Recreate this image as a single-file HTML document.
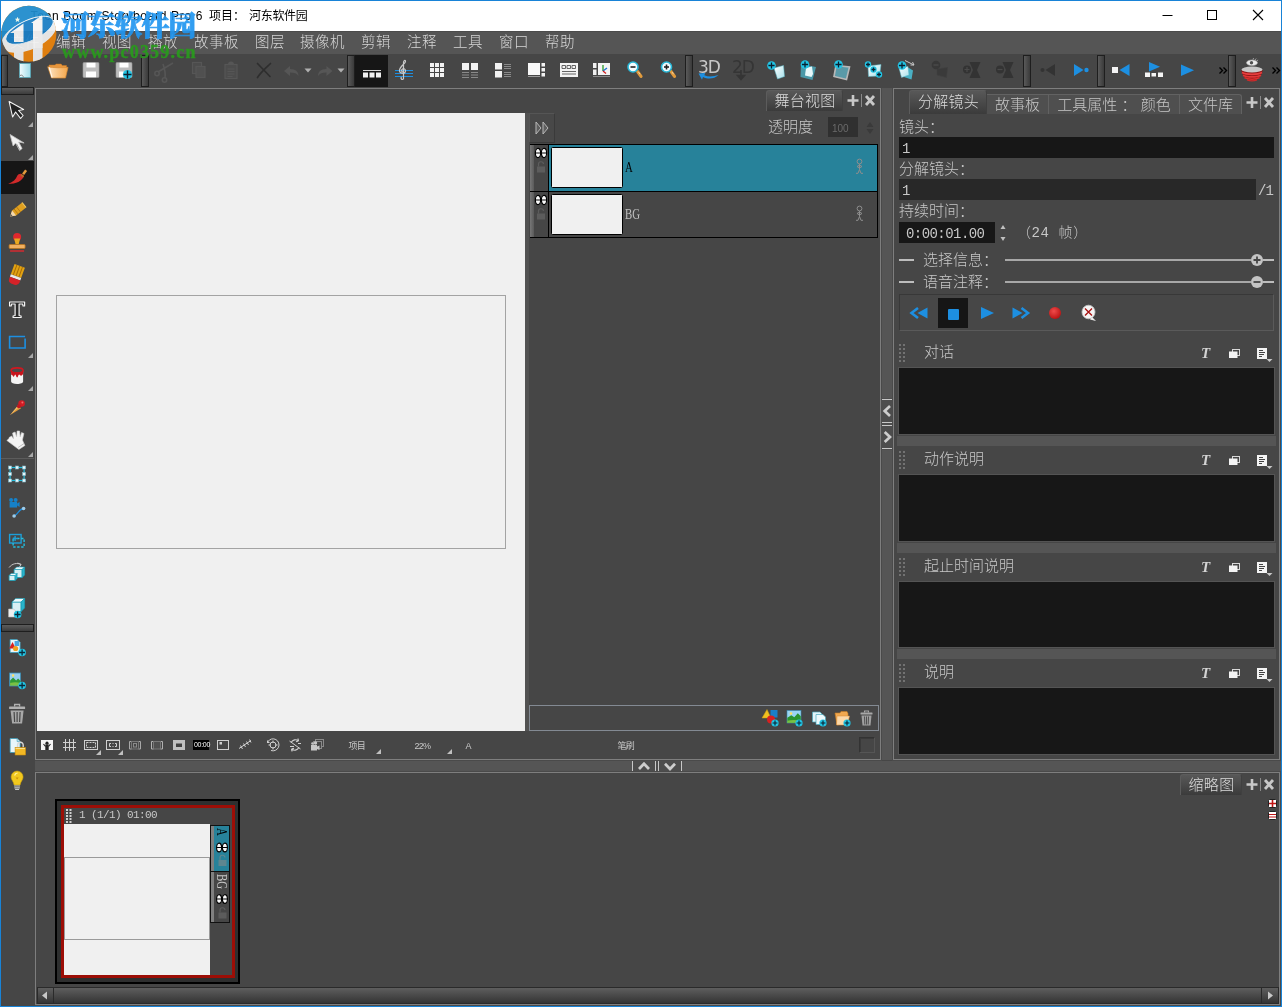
<!DOCTYPE html>
<html lang="zh-CN">
<head>
<meta charset="utf-8">
<title>Toon Boom Storyboard Pro 6 项目: 河东软件园</title>
<style>
html,body{margin:0;padding:0;}
body{width:1282px;height:1007px;overflow:hidden;background:#464646;position:relative;
 font-family:"Liberation Sans","Noto Sans CJK SC",sans-serif;font-weight:300;color:#c8c8c8;font-size:15px;}
.a{position:absolute;}
.ui{font-family:"Liberation Sans","Noto Sans CJK SC",sans-serif;font-weight:300;}
.mono{font-family:"Liberation Mono","Noto Sans CJK SC",monospace;}
.serif{font-family:"Liberation Serif","Noto Serif CJK SC",serif;}
svg{position:absolute;overflow:visible;}
/* window frame */
#frame{left:0;top:0;width:1280px;height:1005px;border:1px solid #1883d7;z-index:50;pointer-events:none;}
#title{left:1px;top:1px;width:1280px;height:30px;background:#fff;}
#title .t{left:30px;top:6px;line-height:20px;font-size:12px;color:#000;font-weight:400;white-space:nowrap;}
#menubar{left:1px;top:31px;width:1280px;height:23px;background:#555;box-shadow:inset 0 1px 0 #4b4b4b;}
#menubar span{position:absolute;top:0px;font-size:14.500px;letter-spacing:0.500px;line-height:22px;color:#d6d6d6;white-space:nowrap;}
#toolbar{left:1px;top:54px;width:1280px;height:34px;background:#464646;}
.hgrip{position:absolute;width:7px;height:32px;top:1px;border:1px solid #1e1e1e;box-sizing:border-box;
 background:linear-gradient(90deg,#5a5a5a,#3a3a3a);}
.line{background:#7e7e7e;}
.dline{background:#3c3c3c;}
.panel{box-sizing:border-box;border:1px solid #7e7e7e;background:#464646;}
.field{background:#171717;box-sizing:border-box;border:1px solid #3a3a3a;}
.tab{box-sizing:border-box;border:1px solid #5c5c5c;border-right-color:#404040;border-bottom:none;padding-left:1px;letter-spacing:0.300px;border-radius:3px 3px 0 0;
 background:linear-gradient(#585858,#3b3b3b);color:#dcdcdc;font-size:15px;text-align:center;white-space:nowrap;}
.tab2{box-sizing:border-box;border:1px solid #626262;border-bottom:none;background:#4f4f4f;color:#c6c6c6;font-size:15px;text-align:center;white-space:nowrap;}
.lbl{white-space:nowrap;font-size:15px;line-height:18px;color:#c8c8c8;}
</style>
</head>
<body style="will-change:transform">
<!-- TITLE BAR -->
<div class="a" id="title">
 <div class="a t" id="t1" style="left:29.500px;top:5px;letter-spacing:0.690px">Toon Boom Storyboard Pro 6</div><div class="a t" id="t2" style="left:208px;top:5px;">项目：</div><div class="a t" id="t3" style="left:248px;top:5px;letter-spacing:-0.300px">河东软件园</div>
 <svg class="a" style="left:1160px;top:7px" width="110" height="14" viewBox="0 0 110 14">
  <path d="M1.5 7.5h10" stroke="#000" stroke-width="1" fill="none"/>
  <rect x="46.500" y="2.500" width="9" height="9" stroke="#000" stroke-width="1" fill="none"/>
  <path d="M92 2l10 10M102 2l-10 10" stroke="#000" stroke-width="1.100" fill="none"/>
 </svg>
</div>
<!-- MENU BAR -->
<div class="a" id="menubar">
 <span style="left:9px">文件</span><span style="left:55px">编辑</span><span style="left:101px">视图</span><span style="left:147px">播放</span><span style="left:193px">故事板</span><span style="left:254px">图层</span><span style="left:299px">摄像机</span><span style="left:360px">剪辑</span><span style="left:406px">注释</span><span style="left:452px">工具</span><span style="left:498px">窗口</span><span style="left:544px">帮助</span>
</div>
<!-- TOOLBAR -->
<div class="a" id="toolbar">
 <div class="hgrip" style="left:0px"></div>
<div class="hgrip" style="left:140px;width:8px"></div>
<div class="hgrip" style="left:346px;width:8px"></div>
<div class="hgrip" style="left:684px;width:8px"></div>
<div class="hgrip" style="left:1022px;width:8px"></div>
<div class="hgrip" style="left:1096px;width:8px"></div>
<div class="hgrip" style="left:1227px;width:8px"></div>
<div class="a" style="left:354px;top:1px;width:33px;height:32px;background:#161616"></div>
<svg class="a" style="left:-1px;top:0" width="1282" height="34" viewBox="0 54 1282 34">
<defs><linearGradient id="gd" x1="0" y1="0" x2="1" y2="0"><stop offset="0" stop-color="#f4fcfe"/><stop offset="1" stop-color="#9fdbe8"/></linearGradient><linearGradient id="gf" x1="0" y1="0" x2="1" y2="0"><stop offset="0" stop-color="#fde3c2"/><stop offset="1" stop-color="#f3a64a"/></linearGradient><linearGradient id="gp" x1="0" y1="0" x2="1" y2="1"><stop offset="0" stop-color="#ffffff"/><stop offset="1" stop-color="#a8e0ea"/></linearGradient></defs>
<rect x="19.500" y="63.500" width="11" height="14" fill="url(#gd)" stroke="#58a8b8" stroke-width="0.800"/><path d="M20 75.500c2-1 3 0 3.500 2" fill="none" stroke="#888" stroke-width="1"/>
<path d="M49 66.500v-1.500h6l1.200-1h5l1 1.500h4.300v3h-17.500z" fill="#e8963c" stroke="#c87a24" stroke-width="0.500"/><path d="M47.700 66.800c6 1.200 14 1.200 20.300 .5l-2.500 10.700h-14z" fill="url(#gf)" stroke="#d88a30" stroke-width="0.700"/><path d="M49.300 67.500l2.800 10" stroke="#fff6ea" stroke-width="1.100"/>
<rect x="83" y="62.500" width="16" height="15" rx="1" fill="#bdbdbd"/><rect x="86.5" y="62.500" width="9" height="5" fill="#fff"/><rect x="86" y="71.500" width="10" height="6" fill="#fff"/><rect x="83" y="62.500" width="16" height="15" rx="1" fill="none" stroke="#9a9a9a" stroke-width="0.600"/>
<rect x="116" y="62.500" width="16" height="15" rx="1" fill="#bdbdbd"/><rect x="119.5" y="62.500" width="9" height="5" fill="#fff"/><rect x="119" y="71.500" width="10" height="6" fill="#fff"/><rect x="116" y="62.500" width="16" height="15" rx="1" fill="none" stroke="#9a9a9a" stroke-width="0.600"/>
<circle cx="127.500" cy="74.500" r="4.600" fill="#22c4e4"/><path d="M127.500 70.500v8M123.500 74.500h8" stroke="#0a2030" stroke-width="1.400"/>
<g stroke="#565656" fill="none" stroke-width="1.600"><path d="M158 72l15-9M163 64c2 6 3 9 2 14"/><circle cx="157" cy="73.500" r="2.200"/><circle cx="164.500" cy="80" r="2.200"/></g>
<rect x="192.500" y="62.500" width="9" height="11" fill="#4c4c4c" stroke="#565656" stroke-width="1.200"/><rect x="196" y="66.500" width="9" height="11" fill="#505050" stroke="#565656" stroke-width="1.200"/>
<rect x="225" y="64.500" width="12" height="14" fill="#4c4c4c" stroke="#565656" stroke-width="1.200"/><path d="M228 64.500a3 3 0 0 1 6 0z" fill="#565656"/><path d="M227.500 69h7M227.500 71.500h7M227.500 74h7M227.500 76.500h5" stroke="#565656" stroke-width="1"/>
<path d="M257.500 63.500l12.500 13M270.500 63.500c-4 4-9 8-13 14" stroke="#2e2e2e" stroke-width="1.700" fill="none" stroke-linecap="round"/>
<path d="M284 71l6-5v3c6 0 8.500 3 8.500 7-1.500-2.500-4-3.500-8.500-3.500v3.500z" fill="#565656"/>
<path d="M304.500 68.500h7l-3.500 4z" fill="#b0b0b0"/>
<path d="M332.500 71l-6-5v3c-6 0-8.500 3-8.500 7 1.500-2.500 4-3.500 8.500-3.500v3.500z" fill="#565656"/>
<path d="M337.500 68.500h7l-3.500 4z" fill="#b0b0b0"/>
<path d="M363 70.500h18" stroke="#d8d8d8" stroke-width="1"/><rect x="363" y="72.500" width="5" height="5" fill="#f0f0f0"/><rect x="369.500" y="72.500" width="5" height="5" fill="#f0f0f0"/><rect x="376" y="72.500" width="5" height="5" fill="#f0f0f0"/>
<path d="M395 70.500h18M395 73.500h18M395 76.500h18" stroke="#1d8fe1" stroke-width="1.200"/><path d="M403 79.500c-2 0-2.500-1.500-1.500-2.500M403.500 79.500v-17c0-2 2-3 2-1s-6 5-6 9c0 3 5 4 6 1 .5-2-1.500-3.500-3-2.500s-1 3 .5 3" fill="none" stroke="#c8c8c8" stroke-width="1.200"/>
<rect x="430" y="63" width="4" height="4" fill="#f2f2f2"/><rect x="435" y="63" width="4" height="4" fill="#f2f2f2"/><rect x="440" y="63" width="4" height="4" fill="#f2f2f2"/><rect x="430" y="68" width="4" height="4" fill="#f2f2f2"/><rect x="435" y="68" width="4" height="4" fill="#f2f2f2"/><rect x="440" y="68" width="4" height="4" fill="#f2f2f2"/><rect x="430" y="73" width="4" height="4" fill="#f2f2f2"/><rect x="435" y="73" width="4" height="4" fill="#f2f2f2"/><rect x="440" y="73" width="4" height="4" fill="#f2f2f2"/>
<rect x="462" y="63" width="7" height="7" fill="#f2f2f2"/><rect x="471" y="63" width="7" height="7" fill="#f2f2f2"/><path d="M462 72.500h7M462 75h7M462 77.500h7M471 72.500h7M471 75h7M471 77.500h7" stroke="#8a8a8a" stroke-width="1"/>
<rect x="495" y="63" width="7" height="6.500" fill="#f2f2f2"/><rect x="495" y="71" width="7" height="6.500" fill="#f2f2f2"/><path d="M504 64.500h7M504 66.500h7M504 68.500h7M504 72.500h7M504 74.500h7M504 76.500h7" stroke="#8a8a8a" stroke-width="1"/>
<rect x="528" y="63" width="12" height="12" fill="#f8f8f8"/><path d="M528 76.500h12" stroke="#9a9a9a" stroke-width="1"/><rect x="541.500" y="63" width="3.500" height="3.500" fill="#f2f2f2"/><rect x="541.500" y="68" width="3.500" height="3.500" fill="#f2f2f2"/><rect x="541.500" y="73" width="3.500" height="3.500" fill="#f2f2f2"/>
<rect x="560" y="63" width="18" height="14" fill="#f4f4f4"/><path d="M562 65.500h3.500v3h-3.500zM567 65.500h3.500v3h-3.500zM572 65.500h3.500v3h-3.500z" fill="none" stroke="#555" stroke-width="0.900"/><path d="M562 71.500h14M562 74h14" stroke="#666" stroke-width="1"/>
<rect x="593" y="63" width="3.500" height="5" fill="#f0f0f0"/><rect x="593" y="69.500" width="3.500" height="5.500" fill="#f0f0f0"/><rect x="598" y="63" width="12" height="12" fill="#f4f4f4"/><path d="M593 76.500h17" stroke="#8a8a8a" stroke-width="1"/><path d="M603 65v6" stroke="#2a9a2a" stroke-width="1.300"/><path d="M603 71l4-3" stroke="#1d6fd0" stroke-width="1.300"/><path d="M603 71l3 2.500" stroke="#d02020" stroke-width="1.300"/>
<path d="M637.8 71.8l3.200 4.600" stroke="#e09a3c" stroke-width="3.200" stroke-linecap="round"/><path d="M638.5 72l1.500 2.200" stroke="#f4d0a0" stroke-width="1" /><circle cx="633" cy="67" r="5" fill="#f4fbfd" stroke="#2ab8d8" stroke-width="1.600"/><path d="M630.5 67h5" stroke="#222" stroke-width="1.600"/>
<path d="M671.3 71.8l3.200 4.600" stroke="#e09a3c" stroke-width="3.200" stroke-linecap="round"/><path d="M672.0 72l1.500 2.200" stroke="#f4d0a0" stroke-width="1" /><circle cx="666.5" cy="67" r="5" fill="#f4fbfd" stroke="#2ab8d8" stroke-width="1.600"/><path d="M664.0 67h5" stroke="#222" stroke-width="1.600"/><path d="M666.5 64.500v5" stroke="#222" stroke-width="1.600"/>
</svg>
<div class="a" style="left:697px;top:4px;font-size:17px;line-height:18px;color:#c8c8c8;font-weight:400;letter-spacing:-1px;font-family:'DejaVu Sans','Liberation Sans',sans-serif">3D</div>
<div class="a" style="left:731px;top:4px;font-size:17px;line-height:18px;color:#353535;font-weight:400;letter-spacing:-1px;font-family:'DejaVu Sans','Liberation Sans',sans-serif">2D</div>
<svg class="a" style="left:-1px;top:0" width="1282" height="34" viewBox="0 54 1282 34">
<path d="M718.500 75c-4 4-10.500 4.500-15.500 2l-1 2.800-3.500-6.300 6.800-.5-1 2.200c4 1.800 9 1.500 14.200-.200z" fill="#1d8fe1"/>
<path d="M741 70v8M737.500 75.500l3.500 4 3.500-4z" stroke="#353535" stroke-width="1.600" fill="#353535"/>
<path d="M774 68l9.500-2.500 1 11-7 2.500z" fill="url(#gp)" stroke="#5ab8c8" stroke-width="0.500"/><circle cx="771.5" cy="65.5" r="4.3" fill="#22c4e4"/><path d="M771.5 62.400000000000006v6.199999999999999M768.4000000000001 65.5h6.199999999999999" stroke="#0a2030" stroke-width="1.300"/>
<path d="M801 64l15 3-3.500 13-12-3z" fill="#4a98a8"/><path d="M806 68l6-1.500 1 7.500-1.500 3-6.500-1.500z" fill="#e8f8fa"/><circle cx="805" cy="64.5" r="4.3" fill="#22c4e4"/><path d="M805 61.400000000000006v6.199999999999999M801.9000000000001 64.5h6.199999999999999" stroke="#0a2030" stroke-width="1.300"/>
<path d="M836 65.500l13.500 1.500-3 12.500-12.500-3z" fill="#5a9aa8" stroke="#b8b8b8" stroke-width="1.600"/><circle cx="838.5" cy="64.5" r="4.3" fill="#22c4e4"/><path d="M838.5 61.400000000000006v6.199999999999999M835.4000000000001 64.5h6.199999999999999" stroke="#0a2030" stroke-width="1.300"/>
<path d="M868 66l13-1.500-1.500 11.500-11 .5z" fill="url(#gp)" stroke="#5ab8c8" stroke-width="0.500"/><circle cx="868" cy="64.5" r="3.2" fill="#22c4e4"/><path d="M868 62.5v4.0M866.0 64.5h4.0" stroke="#0a2030" stroke-width="1.300"/><circle cx="873.5" cy="69.5" r="3.2" fill="#22c4e4"/><path d="M873.5 67.5v4.0M871.5 69.5h4.0" stroke="#0a2030" stroke-width="1.300"/><circle cx="879" cy="74.5" r="3.2" fill="#22c4e4"/><path d="M879 72.5v4.0M877.0 74.5h4.0" stroke="#0a2030" stroke-width="1.300"/>
<path d="M900 70l9-2 4 2.500-1.500 9-9-3z" fill="#4ab0c4"/><path d="M899 68l9-1.500 1 8.500-7.500 2.500z" fill="url(#gp)" stroke="#5ab8c8" stroke-width="0.500"/><path d="M905 60.500l9 4.500M914 65l-3.500 0M914 65l-1.500-3" stroke="#c8c8c8" stroke-width="1" fill="none"/><circle cx="902" cy="65.5" r="4.3" fill="#22c4e4"/><path d="M902 62.400000000000006v6.199999999999999M898.9000000000001 65.5h6.199999999999999" stroke="#0a2030" stroke-width="1.300"/>
<path d="M937 69l10.500-1.500-1 10-9.500-2.500z" fill="#3a3a3a" stroke="#404040" stroke-width="0.600"/><circle cx="936" cy="65" r="4.300" fill="#383838"/><path d="M933.500 65h5" stroke="#4c4c4c" stroke-width="1.300"/>
<path d="M969.5 62h11l-3.500 8 3.500 8h-11l3.500-8z" fill="#333"/><circle cx="967" cy="69.500" r="4" fill="#333"/><path d="M964.500 69.500h5M967 67v5" stroke="#4a4a4a" stroke-width="1.200"/>
<path d="M1002.5 62h11l-3.500 8 3.500 8h-11l3.500-8z" fill="#333"/><circle cx="1000" cy="69.500" r="4" fill="#333"/><path d="M997.500 69.500h5" stroke="#4a4a4a" stroke-width="1.200"/>
<circle cx="1042.500" cy="70" r="2" fill="#333"/><path d="M1055 64v12l-9.500-6z" fill="#333"/>
<path d="M1074 64v12l9.500-6z" fill="#1d8fe1"/><circle cx="1086.500" cy="70" r="2.200" fill="#1d8fe1"/>
<rect x="1112" y="67" width="6" height="6" fill="#f4f4f4"/><path d="M1129.500 64v12l-10-6z" fill="#1d8fe1"/>
<path d="M1149 62v9.500l11-4.800z" fill="#1d8fe1"/><rect x="1145" y="72.500" width="5" height="4.500" fill="#f4f4f4"/><rect x="1151.500" y="73" width="4.500" height="3.500" fill="#f4f4f4"/><rect x="1158" y="72.500" width="5" height="4.500" fill="#f4f4f4"/>
<path d="M1181 64.500v11.500l13-5.800z" fill="#1d8fe1"/>
<path d="M1219.500 67.500l3 3-3 3M1223.500 67.500l3 3-3 3" stroke="#000" stroke-width="1.400" fill="none"/>
<path d="M1272.500 67.500l3 3-3 3M1276.500 67.500l3 3-3 3" stroke="#000" stroke-width="1.400" fill="none"/>
<path d="M1241.500 70c0 5 4 10.500 10.500 10.500s10.500-5.500 10.500-10.500z" fill="#8e1616"/><path d="M1242 72.500c4 2.400 16 2.400 20 0" stroke="#e84040" stroke-width="1.700" fill="none"/><path d="M1243 75.200c4 2.200 14 2.200 18 0" stroke="#e03636" stroke-width="1.600" fill="none"/><path d="M1244.500 77.700c3.500 2 11.500 2 15 0" stroke="#d83030" stroke-width="1.500" fill="none"/><path d="M1247 79.800c3 1.200 7 1.200 10 0" stroke="#d02a2a" stroke-width="1.300" fill="none"/><ellipse cx="1252" cy="69.500" rx="10.500" ry="3" fill="#c8c8c8"/><ellipse cx="1252" cy="62.800" rx="5.500" ry="2.800" fill="#ececec" stroke="#b0b0b0" stroke-width="0.600"/><circle cx="1251.500" cy="62.800" r="1.700" fill="#505050"/><path d="M1255 60l1.200-1.500M1256.500 61l1.600-1M1253 59.600l.6-1.600" stroke="#c0c0c0" stroke-width="0.700"/>
</svg>

</div>
<!-- LEFT TOOLS -->
<div class="a" style="left:1px;top:88px;width:34px;height:918px;background:#464646"></div>
<div class="a" style="left:1px;top:87px;width:33px;height:8px;box-sizing:border-box;border:1px solid #1e1e1e;background:linear-gradient(#5c5c5c,#3c3c3c)"></div>
<div class="a" style="left:1px;top:624px;width:33px;height:8px;box-sizing:border-box;border:1px solid #1e1e1e;background:linear-gradient(#5c5c5c,#3c3c3c)"></div>
<div class="a" style="left:1px;top:161px;width:33px;height:33px;background:#161616"></div>
<div class="a" style="left:1px;top:458px;width:33px;height:1px;background:#5c5c5c"></div>
<svg class="a" style="left:1px;top:95px" width="33" height="33" viewBox="0 0 33 33"><g transform="translate(-0.900 -0.500)"><path d="M9 7l3.500 15.500 3-5 5 6.500 2.500-3-4.500-5 5-1z" fill="#222" stroke="#f4f4f4" stroke-width="1.100" stroke-linejoin="round"/></g></svg><svg class="a" style="left:1px;top:95px" width="33" height="33" viewBox="0 0 33 33"><path d="M32 27v5h-5z" fill="#a8a8a8"/></svg>
<svg class="a" style="left:1px;top:128px" width="33" height="33" viewBox="0 0 33 33"><g transform="translate(-0.900 -0.500)"><path d="M10 7l3 11.500 2.500-3 4 7.500 2.500-2-3.500-6.500 5.500 1z" fill="#f2f2f2" stroke="#c4c4c4" stroke-width="0.800" stroke-linejoin="round"/><path d="M16.500 16.500l3 5.500" stroke="#9a9a9a" stroke-width="1"/></g></svg><svg class="a" style="left:1px;top:128px" width="33" height="33" viewBox="0 0 33 33"><path d="M32 27v5h-5z" fill="#a8a8a8"/></svg>
<svg class="a" style="left:1px;top:161px" width="33" height="33" viewBox="0 0 33 33"><g transform="translate(-0.900 -0.500)"><path d="M22 13l3-4 2 1.500-3 4z" fill="#e39a3c"/><path d="M21.500 13.500l2.500 2c-2 5-8 8-16 8 5-2 8-5 9-8 1-2 3-2.500 4.500-2z" fill="#d22a2a"/><path d="M21.500 13.500l2.500 2-1.200 1.500-2.600-2z" fill="#b06a28"/></g></svg>
<svg class="a" style="left:1px;top:194px" width="33" height="33" viewBox="0 0 33 33"><g transform="translate(-0.900 -0.500)"><path d="M10 23l2-6 10-8 4 5-10 8z" fill="#e0a020"/><path d="M10 23l2-6 4 5z" fill="#f3d9b0"/><path d="M10 23l0.800-2.400 1.600 2z" fill="#555"/><path d="M14 15.500l4 5M16.500 13.500l4 5" stroke="#b87a10" stroke-width="1" fill="none"/><path d="M22 9l4 5" stroke="#f2c860" stroke-width="1.200"/></g></svg>
<svg class="a" style="left:1px;top:227px" width="33" height="33" viewBox="0 0 33 33"><g transform="translate(-0.900 -0.500)"><circle cx="17" cy="10.500" r="4" fill="#e0282e"/><path d="M14 12h6l-1.500 6h-3z" fill="#e8a820"/><rect x="9" y="18" width="16" height="4" rx="1" fill="#f0b060" stroke="#b8741c" stroke-width="0.800"/><path d="M10 24.500h14" stroke="#e0282e" stroke-width="1.400"/></g></svg>
<svg class="a" style="left:1px;top:260px" width="33" height="33" viewBox="0 0 33 33"><g transform="translate(-0.900 -0.500)"><g transform="translate(-0.800 -1.200) rotate(20 17 17)"><rect x="11.500" y="7" width="11" height="11" fill="#e2a212"/><path d="M14 7v11M17 7v11M20 7v11" stroke="#a86e08" stroke-width="1"/><rect x="11.500" y="18" width="11" height="2.500" fill="#e8e8e8"/><path d="M11.500 20.500h11v2a4 4 0 0 1-4 4h-3a4 4 0 0 1-4-4z" fill="#d42228"/></g></g></svg>
<svg class="a" style="left:1px;top:293px" width="33" height="33" viewBox="0 0 33 33"><g transform="translate(-0.900 -0.500)"><path d="M9.500 9.500h15v4h-1.500l-0.500-2h-3.500v11.500l2 0.500v1.500h-8v-1.500l2-0.500v-11.500h-3.500l-0.500 2h-1.500z" fill="#2a2a2a" stroke="#f4f4f4" stroke-width="1.200" stroke-linejoin="round"/></g></svg>
<svg class="a" style="left:1px;top:326px" width="33" height="33" viewBox="0 0 33 33"><g transform="translate(-0.900 -0.500)"><path d="M25 13v9.500h-15.500v-11.500h15.500" fill="none" stroke="#1d8fe1" stroke-width="1.600"/></g></svg><svg class="a" style="left:1px;top:326px" width="33" height="33" viewBox="0 0 33 33"><path d="M32 27v5h-5z" fill="#a8a8a8"/></svg>
<svg class="a" style="left:1px;top:359px" width="33" height="33" viewBox="0 0 33 33"><g transform="translate(-0.900 -0.500)"><path d="M11 12v11c0 1.500 2.500 2.500 6 2.500s6-1 6-2.500v-11z" fill="#f4f4f4"/><ellipse cx="17" cy="12" rx="6" ry="2.600" fill="#4a4a4a" stroke="#d01820" stroke-width="1.600"/><path d="M11 12v4c1 1 1.500 0 2 2 .8 1 1.200-1 2-2 1 0 1 3 2 3s1-3 2-3 1.500 2 2.500 1 .5-1 1.500-1v-4c-1 2-11 2-12 0z" fill="#c8141c"/></g></svg><svg class="a" style="left:1px;top:359px" width="33" height="33" viewBox="0 0 33 33"><path d="M32 27v5h-5z" fill="#a8a8a8"/></svg>
<svg class="a" style="left:1px;top:392px" width="33" height="33" viewBox="0 0 33 33"><g transform="translate(-0.900 -0.500)"><path d="M10 23.500l8-9.500 3 2.800z" fill="#e09a3a"/><path d="M10 23.500l8-9.500 1.300 1.200z" fill="#f0c070"/><circle cx="21.500" cy="12" r="3.300" fill="#d01c24"/><circle cx="18.800" cy="14.800" r="2" fill="#c01820"/><circle cx="22.300" cy="11" r="1" fill="#f06a6a"/></g></svg>
<svg class="a" style="left:1px;top:425px" width="33" height="33" viewBox="0 0 33 33"><g transform="translate(-0.900 -0.500)"><path d="M9 13l2.500-1.500 2 3 -1-6 2.500-1 1.500 5 .5-6 2.500 0 .5 6 1.500-4.500 2.300 1-1.500 6.500 2.500 5.500-6 4-8-6-4-3 2-2z" fill="#f4f4f4" stroke="#d0d0d0" stroke-width="0.600" stroke-linejoin="round"/><path d="M18 23l6-4" stroke="#b0b0b0" stroke-width="0.800"/></g></svg><svg class="a" style="left:1px;top:425px" width="33" height="33" viewBox="0 0 33 33"><path d="M32 27v5h-5z" fill="#a8a8a8"/></svg>
<svg class="a" style="left:1px;top:458px" width="33" height="33" viewBox="0 0 33 33"><g transform="translate(-0.900 -0.500)"><rect x="10" y="10" width="14" height="13" fill="none" stroke="#22bfe0" stroke-width="1.200"/><rect x="8.5" y="8.5" width="3" height="3" fill="#e8f8fc" stroke="#7fb8c8" stroke-width="0.600"/><rect x="15.5" y="8.5" width="3" height="3" fill="#e8f8fc" stroke="#7fb8c8" stroke-width="0.600"/><rect x="22.5" y="8.5" width="3" height="3" fill="#e8f8fc" stroke="#7fb8c8" stroke-width="0.600"/><rect x="8.5" y="15.0" width="3" height="3" fill="#e8f8fc" stroke="#7fb8c8" stroke-width="0.600"/><rect x="22.5" y="15.0" width="3" height="3" fill="#e8f8fc" stroke="#7fb8c8" stroke-width="0.600"/><rect x="8.5" y="21.5" width="3" height="3" fill="#e8f8fc" stroke="#7fb8c8" stroke-width="0.600"/><rect x="15.5" y="21.5" width="3" height="3" fill="#e8f8fc" stroke="#7fb8c8" stroke-width="0.600"/><rect x="22.5" y="21.5" width="3" height="3" fill="#e8f8fc" stroke="#7fb8c8" stroke-width="0.600"/></g></svg>
<svg class="a" style="left:1px;top:491px" width="33" height="33" viewBox="0 0 33 33"><g transform="translate(-0.900 -0.500)"><g transform="translate(0 2)"><rect x="9.500" y="9.500" width="7.500" height="5.500" fill="#1681c8"/><circle cx="11" cy="7.500" r="2" fill="#1681c8"/><circle cx="15.500" cy="7.500" r="2" fill="#1681c8"/><path d="M17 11l2.500-1.500v5l-2.500-1.500z" fill="#1681c8"/><path d="M14 23.500c5-2 3-6 9.500-7.500" fill="none" stroke="#1d8fe1" stroke-width="1.300"/><circle cx="14" cy="23.500" r="1.800" fill="#9ccbea"/><circle cx="23.500" cy="16" r="1.800" fill="#9ccbea"/></g></g></svg>
<svg class="a" style="left:1px;top:524px" width="33" height="33" viewBox="0 0 33 33"><g transform="translate(-0.900 -0.500)"><g transform="translate(0 1.500)"><rect x="9.500" y="9.500" width="11.500" height="8.500" fill="none" stroke="#1d9fd8" stroke-width="1.400"/><rect x="13" y="13.500" width="11" height="8.500" fill="none" stroke="#22bfe0" stroke-width="1.400" stroke-dasharray="2.400 1.600"/><path d="M15 11v5M12.500 13.500h5" stroke="#1d9fd8" stroke-width="1.300"/></g></g></svg>
<svg class="a" style="left:1px;top:557px" width="33" height="33" viewBox="0 0 33 33"><g transform="translate(-0.900 -0.500)"><path d="M9 11c3-4 8-5 12-3" fill="none" stroke="#c8c8c8" stroke-width="1"/><path d="M21 8l-3.500-1.500M21 8l-2 3" stroke="#c8c8c8" stroke-width="1"/><path d="M14 13h8v8h-8z" fill="#d8f0f4" stroke="#18a0b8" stroke-width="0.800"/><path d="M14 13l2.5 -2.5h8l-2.5 2.5z" fill="#eefafc" stroke="#18a0b8" stroke-width="0.600"/><path d="M22 13l2.5 -2.5v8l-2.5 2.5z" fill="#28b4cc" stroke="#18a0b8" stroke-width="0.600"/><path d="M9 19h6v5h-6z" fill="#d8f0f4" stroke="#18a0b8" stroke-width="0.800"/><path d="M9 19l2 -2h6l-2 2z" fill="#eefafc" stroke="#18a0b8" stroke-width="0.600"/><path d="M15 19l2 -2v5l-2 2z" fill="#28b4cc" stroke="#18a0b8" stroke-width="0.600"/></g></svg>
<svg class="a" style="left:1px;top:590px" width="33" height="33" viewBox="0 0 33 33"><g transform="translate(-0.900 -0.500)"><g transform="translate(-0.500 2.500)"><path d="M12.5 10h9v9.5h-9z" fill="#d8f0f4" stroke="#18a0b8" stroke-width="0.800"/><path d="M12.5 10l3.5 -3.5h9l-3.5 3.5z" fill="#eefafc" stroke="#18a0b8" stroke-width="0.600"/><path d="M21.5 10l3.5 -3.5v9.5l-3.5 3.5z" fill="#28b4cc" stroke="#18a0b8" stroke-width="0.600"/><path d="M9 17h5l2 2v6h-7z" fill="#f0f0f0" stroke="#b8b8b8" stroke-width="0.600"/><circle cx="18" cy="22.500" r="3.800" fill="#22c4e4"/><path d="M18 19.500v6M15 22.500h6" stroke="#0a2a3a" stroke-width="1.300"/></g></g></svg>
<svg class="a" style="left:1px;top:632px" width="33" height="33" viewBox="0 0 33 33"><g transform="translate(-0.900 -0.500)"><path d="M10 8h7l3 3v10h-10z" fill="#e8f6fa" stroke="#3a9ab8" stroke-width="0.800"/><rect x="14.500" y="9.500" width="4.500" height="5" fill="#4aa6e0"/><path d="M9 17l3.500-6.500 3 6.500z" fill="#d82020"/><circle cx="15.500" cy="17" r="2.600" fill="#f0a020"/><circle cx="22" cy="21" r="3.800" fill="#22c4e4"/><path d="M22 18v6M19 21h6" stroke="#0a2a3a" stroke-width="1.300"/></g></svg>
<svg class="a" style="left:1px;top:665px" width="33" height="33" viewBox="0 0 33 33"><g transform="translate(-0.900 -0.500)"><rect x="9.500" y="8.500" width="11" height="13" fill="#9ad0f0" stroke="#3a8ab0" stroke-width="0.800"/><path d="M10 21v-5l3-3 3 3 2-2 2.500 2.500v4.500z" fill="#2e9a36"/><path d="M10 21v-2.500c3-1 7-1 10.500 0v2.500z" fill="#7ac043"/><circle cx="13" cy="11" r="1.200" fill="#ffe060"/><circle cx="22" cy="21" r="3.800" fill="#22c4e4"/><path d="M22 18v6M19 21h6" stroke="#0a2a3a" stroke-width="1.300"/></g></svg>
<svg class="a" style="left:1px;top:698px" width="33" height="33" viewBox="0 0 33 33"><g transform="translate(-0.900 -0.500)"><path d="M14.500 9v-2h5v2" fill="none" stroke="#b0b0b0" stroke-width="1.300"/><rect x="9" y="9" width="16" height="2.600" rx="0.600" fill="#b0b0b0"/><path d="M10.500 13h13l-1.500 13h-10z" fill="#a8a8a8"/><path d="M14 14.500l.5 10M17 14.500v10M20 14.500l-.5 10" stroke="#464646" stroke-width="1.200"/></g></svg>
<svg class="a" style="left:1px;top:731px" width="33" height="33" viewBox="0 0 33 33"><g transform="translate(-0.900 -0.500)"><path d="M10 8h7l3 3v11h-10z" fill="#e8f6fa" stroke="#3a9ab8" stroke-width="0.800"/><path d="M17 8v3h3" fill="#bfe4ee" stroke="#3a9ab8" stroke-width="0.600"/><path d="M17.500 17v-2.500a2.800 2.800 0 0 1 5.600 0v2.500" fill="none" stroke="#d8d8d8" stroke-width="1.400"/><rect x="15" y="17" width="10.500" height="7.500" fill="#f2b824" stroke="#c88c10" stroke-width="0.600"/><path d="M15.500 18h9.500" stroke="#fbe08a" stroke-width="1"/></g></svg>
<svg class="a" style="left:1px;top:764px" width="33" height="33" viewBox="0 0 33 33"><g transform="translate(-0.900 -0.500)"><path d="M17 7.500a6 6 0 0 1 6 6c0 3-2.500 4.500-3 8h-6c-.5-3.500-3-5-3-8a6 6 0 0 1 6-6z" fill="#f2c81e" stroke="#c8a010" stroke-width="0.600"/><path d="M14.500 12a3.500 3.500 0 0 1 3-2.500" stroke="#fff4a0" stroke-width="1.200" fill="none"/><path d="M15.500 14h3l-1.500 2z" fill="#c89010"/><path d="M14 22.500h6M14.300 24.300h5.400M15 26h4" stroke="#c8c8c8" stroke-width="1.200"/></g></svg>

<!-- STAGE VIEW PANEL -->
<div class="a panel" style="left:35px;top:88px;width:846px;height:672px;"></div>
<div class="a" style="left:881px;top:88px;width:1px;height:672px;background:#4a4a4a"></div>
<div class="a" style="left:35px;top:760px;width:847px;height:1px;background:#4a4a4a"></div>
<div class="a" id="canvas" style="left:37px;top:113px;width:488px;height:618px;background:#f0f0f0;"></div>
<div class="a" style="left:56px;top:295px;width:450px;height:254px;box-sizing:border-box;border:1px solid #a3a3a3;"></div>
<div class="a" style="left:525px;top:113px;width:4px;height:618px;background:#525252"></div>
<!-- stage tab -->
<div class="a tab" style="left:766px;top:90px;width:77px;height:21px;line-height:20px;">舞台视图</div>
<svg class="a" style="left:847px;top:94px" width="30" height="13" viewBox="0 0 30 13">
 <path d="M6 1v11M0.500 6.500h11" stroke="#c8c8c8" stroke-width="2.600" fill="none"/>
 <path d="M14.500 0v13" stroke="#8a8a8a" stroke-width="1" fill="none"/>
 <path d="M19 2l8 9M27 2l-8 9" stroke="#c8c8c8" stroke-width="2.800" fill="none"/>
</svg>
<!-- collapse button -->
<div class="a" style="left:529px;top:113px;width:26px;height:30px;box-sizing:border-box;border:1px solid #3a3a3a;border-top-color:#555;border-left-color:#555;background:#484848"></div>
<svg class="a" style="left:535px;top:121px" width="15" height="14" viewBox="0 0 15 14">
 <path d="M1 1l5 6-5 6zM8 1l5 6-5 6z" fill="#5e5e5e" stroke="#b8b8b8" stroke-width="1"/>
</svg>
<div class="a lbl" style="left:768px;top:118px;">透明度</div>
<div class="a" style="left:828px;top:117px;width:30px;height:20px;background:#303030;"></div>
<div class="a" style="left:832px;top:122.500px;font-size:10px;line-height:12px;color:#6a6a6a;font-weight:400">100</div>
<svg class="a" style="left:866px;top:122px" width="8" height="12" viewBox="0 0 8 12"><path d="M4 0l3.500 5h-7zM4 12l3.500-5h-7z" fill="#3a3a3a"/></svg>
<!-- layer rows -->
<div class="a" style="left:530px;top:144px;width:348px;height:94px;background:#000"></div>
<div class="a" style="left:530px;top:145px;width:18px;height:46px;background:linear-gradient(90deg,#777 0,#5a5a5a 4px,#464646 4px)"></div>
<div class="a" style="left:530px;top:192px;width:18px;height:45px;background:linear-gradient(90deg,#777 0,#5a5a5a 4px,#464646 4px)"></div>
<div class="a" style="left:549px;top:145px;width:328px;height:46px;background:#27829a"></div>
<div class="a" style="left:549px;top:192px;width:328px;height:45px;background:#464646"></div>
<div class="a" style="left:551px;top:147px;width:72px;height:41px;box-sizing:border-box;border:1px solid #000;border-radius:1.500px;background:#f0f0f0"></div>
<div class="a" style="left:551px;top:194px;width:72px;height:41px;box-sizing:border-box;border:1px solid #000;border-radius:1.500px;background:#f0f0f0"></div>
<div class="a serif" style="left:625px;top:159px;font-size:15px;line-height:16px;color:#000;font-weight:400;transform:scaleX(0.720);transform-origin:0 0">A</div>
<div class="a serif" style="left:625px;top:206px;font-size:15px;line-height:16px;color:#c0c0c0;font-weight:400;transform:scaleX(0.720);transform-origin:0 0">BG</div>
<svg class="a" style="left:0;top:0" width="1282" height="1007" viewBox="0 0 1282 1007">
<g transform="translate(541 153) rotate(0)"><ellipse cx="-3" cy="0" rx="2.600" ry="4.600" fill="#fafafa" stroke="#000" stroke-width="1.100"/><path d="M-5.5 0h5" stroke="#000" stroke-width="1"/><ellipse cx="3" cy="0" rx="2.600" ry="4.600" fill="#fafafa" stroke="#000" stroke-width="1.100"/><path d="M0.5 0h5" stroke="#000" stroke-width="1"/></g>
<g transform="translate(541 167.5) rotate(0)"><rect x="-4" y="-1" width="8" height="6" fill="#5c5c5c"/><path d="M-2.500 -1v-2a2.500 2.500 0 0 1 5 -0.500" fill="none" stroke="#5c5c5c" stroke-width="1.200"/></g>
<g transform="translate(541 200) rotate(0)"><ellipse cx="-3" cy="0" rx="2.600" ry="4.600" fill="#fafafa" stroke="#000" stroke-width="1.100"/><path d="M-5.5 0h5" stroke="#000" stroke-width="1"/><ellipse cx="3" cy="0" rx="2.600" ry="4.600" fill="#fafafa" stroke="#000" stroke-width="1.100"/><path d="M0.5 0h5" stroke="#000" stroke-width="1"/></g>
<g transform="translate(541 214.5) rotate(0)"><rect x="-4" y="-1" width="8" height="6" fill="#5c5c5c"/><path d="M-2.500 -1v-2a2.500 2.500 0 0 1 5 -0.500" fill="none" stroke="#5c5c5c" stroke-width="1.200"/></g>
<g transform="translate(859.5 161.5)" stroke="#8e8e8e" stroke-width="1" fill="none"><circle cx="0" cy="0" r="2.400"/><path d="M0 2.500v5.500M0 3.500l-2.500 1.500 2.500 1.500 2.500-1.500z M0 8l-1.500 3.800h-2M0 8l1.500 3.800h2"/></g>
<g transform="translate(859.5 208.5)" stroke="#8e8e8e" stroke-width="1" fill="none"><circle cx="0" cy="0" r="2.400"/><path d="M0 2.500v5.500M0 3.500l-2.500 1.500 2.500 1.500 2.500-1.500z M0 8l-1.500 3.800h-2M0 8l1.500 3.800h2"/></g>
</svg>

<!-- layer bottom toolbar -->
<div class="a" style="left:529px;top:705px;width:350px;height:27px;box-sizing:border-box;border:1px solid #838a93;border-width:1px 1px 2px 1px;background:#464646"></div>
<svg class="a" style="left:0;top:0" width="1282" height="1007" viewBox="0 0 1282 1007">
<path d="M762 718l5-8.500 4 8.500z" fill="#f0c020" stroke="#c89a10" stroke-width="0.500"/><rect x="770.500" y="710" width="7" height="7.500" fill="#1a80c8"/><circle cx="771" cy="719.500" r="4" fill="#d82020"/><circle cx="775" cy="723" r="3.600" fill="#22c4e4"/><path d="M775 720.599v4.800M772.599 723h4.800" stroke="#0a2030" stroke-width="1.100"/>
<rect x="787" y="710.500" width="14" height="12.500" fill="#9ad4f4" stroke="#3a8ab0" stroke-width="0.600"/><path d="M787.300 722.700v-5l4-2.500 3 2 3.500-4 3 3v6.500z" fill="#2a942e"/><path d="M787.300 722.700v-2c4-1 9-1 13.500 0v2z" fill="#7ac043"/><circle cx="791" cy="713.500" r="1.300" fill="#ffe060"/><circle cx="799" cy="723" r="3.600" fill="#22c4e4"/><path d="M799 720.599v4.800M796.599 723h4.800" stroke="#0a2030" stroke-width="1.100"/>
<path d="M812.500 712h7.500l2 2v8h-9.500z" fill="#e4f6fa" stroke="#4aa8bc" stroke-width="0.700"/><path d="M816 714.500h7l2.500 2.500v7.500h-9.500z" fill="#eefafc" stroke="#4aa8bc" stroke-width="0.700"/><circle cx="823" cy="723" r="3.600" fill="#22c4e4"/><path d="M823 720.599v4.800M820.599 723h4.800" stroke="#0a2030" stroke-width="1.100"/>
<path d="M835 713h5l1-1.500h6l1 2v9.500l-11 2z" fill="#f0a850" stroke="#c87a20" stroke-width="0.600"/><path d="M837 716h12.500l-2 9h-11z" fill="#fcd8a8" stroke="#d88a30" stroke-width="0.500"/><circle cx="847" cy="723" r="3.600" fill="#22c4e4"/><path d="M847 720.599v4.800M844.599 723h4.800" stroke="#0a2030" stroke-width="1.100"/>
<path d="M864.500 712.500v-1.500h4v1.500" fill="none" stroke="#a8a8a8" stroke-width="1.100"/><rect x="860.500" y="712.500" width="12" height="2" rx="0.500" fill="#a8a8a8"/><path d="M861.500 715.500h10l-1 10h-8z" fill="#a0a0a0"/><path d="M864.500 716.500l.3 8M866.500 716.500v8M868.500 716.500l-.3 8" stroke="#464646" stroke-width="0.900"/>
</svg>

<!-- stage bottom toolbar -->
<div class="a" style="left:37px;top:731px;width:843px;height:28px;background:#464646"></div>
<svg class="a" style="left:0;top:0" width="1282" height="1007" viewBox="0 0 1282 1007">
<rect x="41" y="740" width="12" height="10" fill="#f4f4f4"/><circle cx="47" cy="743.200" r="1.600" fill="#222"/><rect x="45.300" y="744.500" width="3.400" height="5.500" fill="#222"/><path d="M45.500 746.500l-2-2.500M48.500 746.500l2-2.500" stroke="#222" stroke-width="1.100" fill="none"/>
<path d="M65.500 739v12M69.500 739v12M73.500 739v12M63 742.500h13M63 747.500h13" stroke="#d0d0d0" stroke-width="1" fill="none"/>
<rect x="84.500" y="740.500" width="13" height="9" fill="none" stroke="#d0d0d0" stroke-width="1"/><rect x="86.500" y="742.500" width="9" height="5" fill="none" stroke="#d0d0d0" stroke-width="1" stroke-dasharray="2 1"/><path d="M101 750v5h-5z" fill="#c0c0c0"/>
<rect x="106.500" y="740.500" width="13" height="9" fill="none" stroke="#d0d0d0" stroke-width="1"/><path d="M111 743.500h-1.500v3h1.500M115 743.500h1.500v3h-1.500M112.500 743.500h1M112.500 746.500h1" fill="none" stroke="#d0d0d0" stroke-width="1"/><path d="M123 750v5h-5z" fill="#c0c0c0"/>
<path d="M131.500 741.500h-2v7.500h2M138.500 741.500h2v7.500h-2" fill="none" stroke="#a8a8a8" stroke-width="1"/><rect x="131.500" y="741.500" width="7" height="7.500" fill="none" stroke="#777" stroke-width="1"/><rect x="133.500" y="743.500" width="3" height="3.500" fill="none" stroke="#8a8a8a" stroke-width="1"/>
<path d="M153.500 741.500h-2v7.500h2M160.500 741.500h2v7.500h-2" fill="none" stroke="#b0b0b0" stroke-width="1"/><rect x="153.500" y="741.500" width="7" height="7.500" fill="#505050" stroke="#777" stroke-width="1"/>
<rect x="173" y="740" width="12" height="10" fill="#c0c0c0"/><rect x="176" y="743.500" width="6" height="3.500" fill="#404040"/>
<rect x="193" y="740" width="16" height="10" fill="#000"/>
<rect x="217.500" y="740.500" width="11" height="9" fill="none" stroke="#d0d0d0" stroke-width="1"/><rect x="219.500" y="742" width="2.500" height="2.500" fill="#d0d0d0"/>
<path d="M239 748.500l12-8M240.500 745.500l2 3.500M243.500 743.500l2 3.500M246.500 741.500l2 3.500M249.500 739.500l1.500 3" stroke="#d0d0d0" stroke-width="1" fill="none"/>
<circle cx="273" cy="745" r="3" fill="none" stroke="#d0d0d0" stroke-width="1"/><path d="M273 740.500v2.500M273 747v2.500M268.500 745h2.500M275 745h2.500" stroke="#d0d0d0" stroke-width="1"/><path d="M268 741.500a6 6 0 1 1 3 9" fill="none" stroke="#d0d0d0" stroke-width="1"/><path d="M267 740v3h3z" fill="#d0d0d0"/>
<path d="M289.500 741l11 8" stroke="#d0d0d0" stroke-width="1"/><path d="M291 742.500c2-3 5-3.500 7.500-1.500M298.500 741l-.5-2.500M298.500 741l-2.500 .8M299 747.500c-2 3-5 3.500-7.500 1.500M291.500 749l.5 2.500M291.500 749l2.500-.8" fill="none" stroke="#d0d0d0" stroke-width="1.100"/><path d="M290 746.500h4M298 743.500h3" stroke="#d0d0d0" stroke-width="1"/>
<rect x="315.500" y="739.500" width="8" height="7" fill="none" stroke="#8a8a8a" stroke-width="1"/><rect x="313.500" y="741.500" width="8" height="7" fill="#464646" stroke="#8a8a8a" stroke-width="1"/><rect x="311" y="745" width="6" height="5.500" fill="#c8c8c8"/><path d="M317 746.500l2.500-1v4.500l-2.500-1z" fill="#c8c8c8"/><circle cx="312.500" cy="743.500" r="1.300" fill="#c8c8c8"/><circle cx="315.500" cy="743" r="1.700" fill="#c8c8c8"/>
<path d="M381 749v5h-5z" fill="#c0c0c0"/><path d="M452 749v5h-5z" fill="#c0c0c0"/>
</svg>
<div class="a" style="left:194px;top:741px;width:14px;font-size:7px;line-height:8px;color:#fff;font-weight:400;letter-spacing:-0.300px;text-align:center;white-space:nowrap;font-family:'Liberation Sans',sans-serif">00:00</div>

<div class="a" style="left:348.500px;top:740.500px;font-size:9px;line-height:10px;color:#c8c8c8;font-weight:400;letter-spacing:-0.800px">项目</div>
<div class="a" style="left:414.500px;top:741px;font-size:9px;line-height:10px;color:#c8c8c8;font-weight:400;letter-spacing:-0.800px">22%</div>
<div class="a" style="left:465.500px;top:741px;font-size:9px;line-height:10px;color:#c8c8c8;font-weight:400">A</div>
<div class="a" style="left:617.500px;top:740.500px;font-size:9px;line-height:10px;color:#c8c8c8;font-weight:400;letter-spacing:-0.800px">笔刷</div>
<div class="a" style="left:859px;top:737px;width:16px;height:16px;box-sizing:border-box;border:1px solid #333;border-right-color:#555;border-bottom-color:#555;box-shadow:inset 1px 1px 0 #3a3a3a"></div>
<!-- splitters -->
<div class="a" style="left:882px;top:88px;width:10px;height:672px;background:#555"></div>
<div class="a" style="left:35px;top:761px;width:1246px;height:10px;background:#555"></div>
<div class="a" style="left:632px;top:761px;width:50px;height:10px;background:#4d4d4d"></div>
<svg class="a" style="left:631px;top:760px" width="52" height="12" viewBox="0 0 52 12">
 <path d="M1.500 1v10M24.500 1v10M27.500 1v10M50.500 1v10" stroke="#c8c8c8" stroke-width="1" fill="none"/>
 <path d="M8 9l5-5.300 5 5.300M34 3.700l5 5.300 5-5.300" stroke="#cdcdcd" stroke-width="2.700" fill="none"/>
</svg>
<div class="a" style="left:881px;top:398px;width:11px;height:52px;background:#4d4d4d"></div>
<svg class="a" style="left:881px;top:398px" width="12" height="52" viewBox="0 0 12 52">
 <path d="M1 1.500h10M1 24.500h10M1 27.500h10M1 50.500h10" stroke="#c8c8c8" stroke-width="1" fill="none"/>
 <path d="M9 8l-5.300 5 5.300 5M3.700 34l5.300 5-5.300 5" stroke="#cdcdcd" stroke-width="2.700" fill="none"/>
</svg>

<!-- RIGHT PANEL -->
<div class="a" style="left:892px;top:88px;width:1px;height:673px;background:#4a4a4a"></div>
<div class="a panel" style="left:893px;top:88px;width:387px;height:672px;"></div>
<div class="a" style="left:892px;top:760px;width:389px;height:1px;background:#4a4a4a"></div>
<div class="a" style="left:1280px;top:88px;width:1px;height:673px;background:#4a4a4a"></div>
<div class="a tab2" style="left:986px;top:94px;width:63px;height:20px;line-height:19px;">故事板</div>
<div class="a tab2" style="left:1048px;top:94px;width:132px;height:20px;line-height:19px;">工具属性 ： 颜色</div>
<div class="a tab2" style="left:1179px;top:94px;width:63px;height:20px;line-height:19px;border-radius:0 3px 0 0">文件库</div>
<div class="a tab" style="left:909px;top:90px;width:78px;height:24px;line-height:22px;">分解镜头</div>
<svg class="a" style="left:1246px;top:96px" width="30" height="13" viewBox="0 0 30 13">
 <path d="M6 1v11M0.500 6.500h11" stroke="#c8c8c8" stroke-width="2.600" fill="none"/>
 <path d="M14.500 0v13" stroke="#8a8a8a" stroke-width="1" fill="none"/>
 <path d="M19 2l8 9M27 2l-8 9" stroke="#c8c8c8" stroke-width="2.800" fill="none"/>
</svg>
<div class="a lbl" style="left:899px;top:118px;">镜头：</div>
<div class="a" style="left:899px;top:137px;width:375px;height:21px;background:#171717"></div>
<div class="a mono" style="left:902px;top:142px;font-size:14px;line-height:15px;color:#c8c8c8;font-weight:400">1</div>
<div class="a lbl" style="left:899px;top:160px;">分解镜头：</div>
<div class="a" style="left:899px;top:179px;width:357px;height:21px;background:#282828"></div>
<div class="a mono" style="left:902px;top:184px;font-size:14px;line-height:15px;color:#c8c8c8;font-weight:400">1</div>
<div class="a mono" style="left:1258px;top:184px;font-size:14px;line-height:15px;color:#c8c8c8;font-weight:400;letter-spacing:-0.800px">/1</div>
<div class="a lbl" style="left:899px;top:202px;">持续时间：</div>
<div class="a" style="left:899px;top:222px;width:96px;height:21px;background:#171717"></div>
<div class="a mono" style="left:906px;top:227px;font-size:14px;line-height:15px;color:#c8c8c8;font-weight:400;letter-spacing:-0.560px">0:00:01.00</div>
<svg class="a" style="left:1000px;top:224px" width="6" height="18" viewBox="0 0 6 18"><path d="M3 1l2.500 4h-5zM3 17l2.500-4h-5z" fill="#c0c0c0"/></svg>
<div class="a mono" style="left:1017px;top:225px;font-size:14px;line-height:16px;color:#c8c8c8;font-weight:300;letter-spacing:0.600px">（24 帧）</div>
<div class="a" style="left:899px;top:259px;width:15px;height:2px;background:#bdbdbd"></div>
<div class="a lbl" style="left:923px;top:251px;">选择信息：</div>
<div class="a" style="left:1005px;top:259px;width:246px;height:2px;background:#a8a8a8"></div>
<div class="a" style="left:1263px;top:259px;width:11px;height:2px;background:#bdbdbd"></div>
<svg class="a" style="left:1257px;top:260px" width="1" height="1"><circle cx="0" cy="0" r="6" fill="#c4c4c4"/><path d="M-3.500 0h7M0 -3.500v7" stroke="#464646" stroke-width="1.800" fill="none"/></svg>
<div class="a" style="left:899px;top:281px;width:15px;height:2px;background:#bdbdbd"></div>
<div class="a lbl" style="left:923px;top:273px;">语音注释：</div>
<div class="a" style="left:1005px;top:281px;width:246px;height:2px;background:#a8a8a8"></div>
<div class="a" style="left:1263px;top:281px;width:11px;height:2px;background:#bdbdbd"></div>
<svg class="a" style="left:1257px;top:282px" width="1" height="1"><circle cx="0" cy="0" r="6" fill="#c4c4c4"/><path d="M-3.500 0h7" stroke="#464646" stroke-width="1.800" fill="none"/></svg>
<div class="a" style="left:899px;top:294px;width:375px;height:37px;box-sizing:border-box;border:1px solid #383838;border-right-color:#5a5a5a;border-bottom-color:#5a5a5a;background:#474747"></div>
<div class="a" style="left:938px;top:298px;width:30px;height:30px;background:#161616"></div>
<svg class="a" style="left:899px;top:294px" width="375" height="37" viewBox="0 0 375 37">
 <defs><radialGradient id="rg" cx="0.400" cy="0.350" r="0.700"><stop offset="0" stop-color="#f04a4a"/><stop offset="1" stop-color="#b81010"/></radialGradient></defs>
 <path d="M19 14l-6.500 5 6.500 5" fill="none" stroke="#1d8fe1" stroke-width="2.600"/><path d="M28.500 13.500v11l-10-5.500z" fill="#1d8fe1"/>
 <rect x="49" y="15" width="11" height="11" rx="1" fill="#1d8fe1"/>
 <path d="M82 13v12l13-6z" fill="#1d8fe1"/>
 <path d="M122.500 14l6.500 5-6.500 5" fill="none" stroke="#1d8fe1" stroke-width="2.600"/><path d="M113.500 13.500v11l10-5.500z" fill="#1d8fe1"/>
 <circle cx="156" cy="19" r="6" fill="url(#rg)"/>
 <ellipse cx="189.500" cy="18" rx="6.500" ry="6.800" fill="#f6f6f6" stroke="#c8c8c8" stroke-width="0.800"/>
 <path d="M193 23l4 4-6-1.500z" fill="#eee"/>
 <path d="M186 14.500l7 7M193 14.500l-7 7" stroke="#a81414" stroke-width="1.400" fill="none"/>
</svg>
<svg class="a" style="left:899px;top:344px" width="6" height="18" viewBox="0 0 6 18"><g fill="#727272"><rect x="0" y="0" width="2" height="2"/><rect x="4" y="0" width="2" height="2"/><rect x="0" y="4" width="2" height="2"/><rect x="4" y="4" width="2" height="2"/><rect x="0" y="8" width="2" height="2"/><rect x="4" y="8" width="2" height="2"/><rect x="0" y="12" width="2" height="2"/><rect x="4" y="12" width="2" height="2"/><rect x="0" y="16" width="2" height="2"/><rect x="4" y="16" width="2" height="2"/></g></svg>
<div class="a lbl" style="left:924px;top:343px;">对话</div>
<div class="a serif" style="left:1201px;top:345px;font-size:15px;line-height:16px;font-style:italic;font-weight:700;color:#d4d4d4">T</div>
<svg class="a" style="left:1228px;top:348px" width="46" height="16" viewBox="0 0 46 16">
 <rect x="4.500" y="1.500" width="7" height="6" fill="none" stroke="#d8d8d8" stroke-width="1"/><rect x="1" y="3.500" width="8.500" height="6.500" fill="#f4f4f4"/>
 <rect x="29" y="0" width="10" height="11" fill="#f4f4f4"/><path d="M31 2.500h4M31 4.500h6M31 6.500h5M31 8.500h3" stroke="#444" stroke-width="1" fill="none"/><path d="M38.500 11h6l-3 3z" fill="#c8c8c8"/>
</svg>
<div class="a" style="left:898px;top:367px;width:377px;height:68px;box-sizing:border-box;border:1px solid #545454;background:#171717"></div>
<div class="a" style="left:897px;top:436px;width:379px;height:10px;background:#555"></div>
<svg class="a" style="left:899px;top:451px" width="6" height="18" viewBox="0 0 6 18"><g fill="#727272"><rect x="0" y="0" width="2" height="2"/><rect x="4" y="0" width="2" height="2"/><rect x="0" y="4" width="2" height="2"/><rect x="4" y="4" width="2" height="2"/><rect x="0" y="8" width="2" height="2"/><rect x="4" y="8" width="2" height="2"/><rect x="0" y="12" width="2" height="2"/><rect x="4" y="12" width="2" height="2"/><rect x="0" y="16" width="2" height="2"/><rect x="4" y="16" width="2" height="2"/></g></svg>
<div class="a lbl" style="left:924px;top:450px;">动作说明</div>
<div class="a serif" style="left:1201px;top:452px;font-size:15px;line-height:16px;font-style:italic;font-weight:700;color:#d4d4d4">T</div>
<svg class="a" style="left:1228px;top:455px" width="46" height="16" viewBox="0 0 46 16">
 <rect x="4.500" y="1.500" width="7" height="6" fill="none" stroke="#d8d8d8" stroke-width="1"/><rect x="1" y="3.500" width="8.500" height="6.500" fill="#f4f4f4"/>
 <rect x="29" y="0" width="10" height="11" fill="#f4f4f4"/><path d="M31 2.500h4M31 4.500h6M31 6.500h5M31 8.500h3" stroke="#444" stroke-width="1" fill="none"/><path d="M38.500 11h6l-3 3z" fill="#c8c8c8"/>
</svg>
<div class="a" style="left:898px;top:474px;width:377px;height:68px;box-sizing:border-box;border:1px solid #545454;background:#171717"></div>
<div class="a" style="left:897px;top:543px;width:379px;height:10px;background:#555"></div>
<svg class="a" style="left:899px;top:558px" width="6" height="18" viewBox="0 0 6 18"><g fill="#727272"><rect x="0" y="0" width="2" height="2"/><rect x="4" y="0" width="2" height="2"/><rect x="0" y="4" width="2" height="2"/><rect x="4" y="4" width="2" height="2"/><rect x="0" y="8" width="2" height="2"/><rect x="4" y="8" width="2" height="2"/><rect x="0" y="12" width="2" height="2"/><rect x="4" y="12" width="2" height="2"/><rect x="0" y="16" width="2" height="2"/><rect x="4" y="16" width="2" height="2"/></g></svg>
<div class="a lbl" style="left:924px;top:557px;">起止时间说明</div>
<div class="a serif" style="left:1201px;top:559px;font-size:15px;line-height:16px;font-style:italic;font-weight:700;color:#d4d4d4">T</div>
<svg class="a" style="left:1228px;top:562px" width="46" height="16" viewBox="0 0 46 16">
 <rect x="4.500" y="1.500" width="7" height="6" fill="none" stroke="#d8d8d8" stroke-width="1"/><rect x="1" y="3.500" width="8.500" height="6.500" fill="#f4f4f4"/>
 <rect x="29" y="0" width="10" height="11" fill="#f4f4f4"/><path d="M31 2.500h4M31 4.500h6M31 6.500h5M31 8.500h3" stroke="#444" stroke-width="1" fill="none"/><path d="M38.500 11h6l-3 3z" fill="#c8c8c8"/>
</svg>
<div class="a" style="left:898px;top:581px;width:377px;height:67px;box-sizing:border-box;border:1px solid #545454;background:#171717"></div>
<div class="a" style="left:897px;top:649px;width:379px;height:10px;background:#555"></div>
<svg class="a" style="left:899px;top:664px" width="6" height="18" viewBox="0 0 6 18"><g fill="#727272"><rect x="0" y="0" width="2" height="2"/><rect x="4" y="0" width="2" height="2"/><rect x="0" y="4" width="2" height="2"/><rect x="4" y="4" width="2" height="2"/><rect x="0" y="8" width="2" height="2"/><rect x="4" y="8" width="2" height="2"/><rect x="0" y="12" width="2" height="2"/><rect x="4" y="12" width="2" height="2"/><rect x="0" y="16" width="2" height="2"/><rect x="4" y="16" width="2" height="2"/></g></svg>
<div class="a lbl" style="left:924px;top:663px;">说明</div>
<div class="a serif" style="left:1201px;top:665px;font-size:15px;line-height:16px;font-style:italic;font-weight:700;color:#d4d4d4">T</div>
<svg class="a" style="left:1228px;top:668px" width="46" height="16" viewBox="0 0 46 16">
 <rect x="4.500" y="1.500" width="7" height="6" fill="none" stroke="#d8d8d8" stroke-width="1"/><rect x="1" y="3.500" width="8.500" height="6.500" fill="#f4f4f4"/>
 <rect x="29" y="0" width="10" height="11" fill="#f4f4f4"/><path d="M31 2.500h4M31 4.500h6M31 6.500h5M31 8.500h3" stroke="#444" stroke-width="1" fill="none"/><path d="M38.500 11h6l-3 3z" fill="#c8c8c8"/>
</svg>
<div class="a" style="left:898px;top:687px;width:377px;height:68px;box-sizing:border-box;border:1px solid #545454;background:#171717"></div>

<!-- BOTTOM PANEL -->
<div class="a" style="left:35px;top:771px;width:1246px;height:1px;background:#4a4a4a"></div>
<div class="a panel" style="left:35px;top:772px;width:1245px;height:233px;"></div>
<div class="a" style="left:1280px;top:772px;width:1px;height:234px;background:#4a4a4a"></div>
<div class="a" style="left:35px;top:1005px;width:1246px;height:1px;background:#4a4a4a"></div>
<div class="a tab" style="left:1180px;top:774px;width:62px;height:21px;line-height:20px;">缩略图</div>
<svg class="a" style="left:1246px;top:778px" width="30" height="13" viewBox="0 0 30 13">
 <path d="M6 1v11M0.500 6.500h11" stroke="#c8c8c8" stroke-width="2.600" fill="none"/>
 <path d="M14.500 0v13" stroke="#8a8a8a" stroke-width="1" fill="none"/>
 <path d="M19 2l8 9M27 2l-8 9" stroke="#c8c8c8" stroke-width="2.800" fill="none"/>
</svg>
<svg class="a" style="left:1268px;top:799px" width="9" height="21" viewBox="0 0 9 21">
 <rect x="0.500" y="0.500" width="8" height="8" rx="1" fill="#fff" stroke="#222" stroke-width="1"/>
 <path d="M4.500 1v7M1 4.500h7" stroke="#c01414" stroke-width="1.600" fill="none"/>
 <rect x="0.500" y="12.500" width="8" height="8" rx="1" fill="#fff" stroke="#222" stroke-width="1"/>
 <path d="M1 15.500h7M1 18h7" stroke="#c01414" stroke-width="1.200" fill="none"/>
</svg>
<!-- thumbnail -->
<div class="a" style="left:55px;top:799px;width:185px;height:185px;background:#000"></div>
<div class="a" style="left:57px;top:801px;width:181px;height:181px;background:#2e2f2f"></div>
<div class="a" style="left:61px;top:805px;width:174px;height:173px;background:#9c0e06"></div>
<div class="a" style="left:64px;top:808px;width:168px;height:167px;background:#464646"></div>
<svg class="a" style="left:66px;top:809px" width="6" height="14" viewBox="0 0 6 14"><path d="M1 0v14M4.500 0v14" stroke="#d0d0d0" stroke-width="2" stroke-dasharray="2 1" fill="none"/></svg>
<div class="a mono" style="left:79px;top:808px;font-size:11px;line-height:14px;color:#c8c8c8;font-weight:400;white-space:pre;letter-spacing:-0.600px">1 (1/1) 01:00</div>
<div class="a" style="left:64px;top:824px;width:146px;height:151px;background:#f0f0f0"></div>
<div class="a" style="left:64px;top:857px;width:146px;height:83px;box-sizing:border-box;border:1px solid #9a9a9a;"></div>
<!-- thumb layer tabs -->
<div class="a" style="left:210px;top:825px;width:20px;height:98px;background:#111"></div>
<div class="a" style="left:211px;top:826px;width:18px;height:45px;background:linear-gradient(90deg,#808080 0,#808080 3px,#27829a 3px)"></div>
<div class="a" style="left:211px;top:872px;width:18px;height:50px;background:linear-gradient(90deg,#808080 0,#808080 3px,#464646 3px)"></div>
<div class="a serif" style="left:214px;top:827.500px;width:16px;font-size:15px;line-height:16px;color:#000;font-weight:400;writing-mode:vertical-rl;transform:scaleY(0.720);transform-origin:0 0">A</div>
<div class="a serif" style="left:214px;top:873.500px;width:16px;font-size:15px;line-height:16px;color:#c8c8c8;font-weight:400;writing-mode:vertical-rl;transform:scaleY(0.720);transform-origin:0 0">BG</div>
<svg class="a" style="left:0;top:0" width="1282" height="1007" viewBox="0 0 1282 1007">
<g transform="translate(222 847.5) rotate(0)"><ellipse cx="-2.9" cy="0" rx="2.500" ry="4.400" fill="#fafafa" stroke="#000" stroke-width="1.100"/><path d="M-5.4 0h5" stroke="#000" stroke-width="1"/><ellipse cx="2.9" cy="0" rx="2.500" ry="4.400" fill="#fafafa" stroke="#000" stroke-width="1.100"/><path d="M0.3999999999999999 0h5" stroke="#000" stroke-width="1"/></g>
<g transform="translate(222.5 861) rotate(0)"><rect x="-4" y="-1" width="8" height="6" fill="#5e8690"/><path d="M-2.500 -1v-2a2.500 2.500 0 0 1 5 -0.500" fill="none" stroke="#5e8690" stroke-width="1.200"/></g>
<g transform="translate(222 899) rotate(0)"><ellipse cx="-2.9" cy="0" rx="2.500" ry="4.400" fill="#fafafa" stroke="#000" stroke-width="1.100"/><path d="M-5.4 0h5" stroke="#000" stroke-width="1"/><ellipse cx="2.9" cy="0" rx="2.500" ry="4.400" fill="#fafafa" stroke="#000" stroke-width="1.100"/><path d="M0.3999999999999999 0h5" stroke="#000" stroke-width="1"/></g>
<g transform="translate(222.5 913.5) rotate(0)"><rect x="-4" y="-1" width="8" height="6" fill="#5c5c5c"/><path d="M-2.500 -1v-2a2.500 2.500 0 0 1 5 -0.500" fill="none" stroke="#5c5c5c" stroke-width="1.200"/></g>
</svg>

<!-- scrollbar -->
<div class="a" style="left:37px;top:987px;width:1242px;height:17px;box-sizing:border-box;border:1px solid #2a2a2a;background:linear-gradient(#5e5e5e,#343434)"></div>
<div class="a" style="left:53px;top:988px;width:1px;height:15px;background:#2a2a2a"></div>
<div class="a" style="left:1261px;top:988px;width:1px;height:15px;background:#2a2a2a"></div>
<svg class="a" style="left:37px;top:987px" width="1242" height="17" viewBox="0 0 1242 17">
 <path d="M10 4.500v8l-5-4z" fill="#c8c8c8"/><path d="M1231 4.500v8l5-4z" fill="#c8c8c8"/>
</svg>

<!-- WATERMARK -->
<svg class="a" style="left:0;top:0;z-index:40;opacity:0.940" width="60" height="64" viewBox="0 0 60 64">
 <defs><clipPath id="wmc"><ellipse cx="28.800" cy="33.800" rx="27.600" ry="28"/></clipPath></defs>
 <g clip-path="url(#wmc)">
  <rect x="0" y="0" width="60" height="64" fill="#e8820c"/>
  <rect x="14" y="40" width="9.500" height="24" fill="#ececec"/>
  <rect x="33" y="40" width="9.500" height="24" fill="#ececec"/>
  <g transform="rotate(-24 28.500 34)">
   <rect x="-10" y="-10" width="80" height="44" fill="#1f8ccc"/>
   <ellipse cx="28.500" cy="35" rx="29.500" ry="14.500" fill="#ededed"/>
   <ellipse cx="31" cy="31" rx="25.500" ry="10.300" fill="#1a7ec4" stroke="#eef4f8" stroke-width="0.900"/>
  </g>
  <path d="M10 33l13.500-9.500v18.500h-9.500v-9z" fill="#f4f4f4"/>
  <path d="M31 23l10.600-7.400 0.900 0.400v32h-9.500v-25z" fill="#f4f4f4"/>
  <path d="M17.500 16.800l.8 1.900 2 .1-1.600 1.300.6 2-1.800-1.100-1.800 1.100.6-2-1.600-1.300 2-.1z" fill="#f0f8e8"/>
 </g>
</svg>
<div class="a serif" style="left:61px;top:6.500px;z-index:41;font-size:28px;line-height:40px;font-weight:900;color:#2196f0;-webkit-text-stroke:0.700px #2196f0;opacity:0.920;white-space:nowrap;letter-spacing:-1.200px">河东软件园</div>
<div class="a serif" style="left:62px;top:40px;z-index:41;font-size:18px;line-height:24px;font-weight:700;color:#2a9a1e;-webkit-text-stroke:0.400px #2a9a1e;opacity:0.950;white-space:nowrap;letter-spacing:1.200px">www.pc0359.cn</div>

<div class="a" id="frame"></div>
</body>
</html>
